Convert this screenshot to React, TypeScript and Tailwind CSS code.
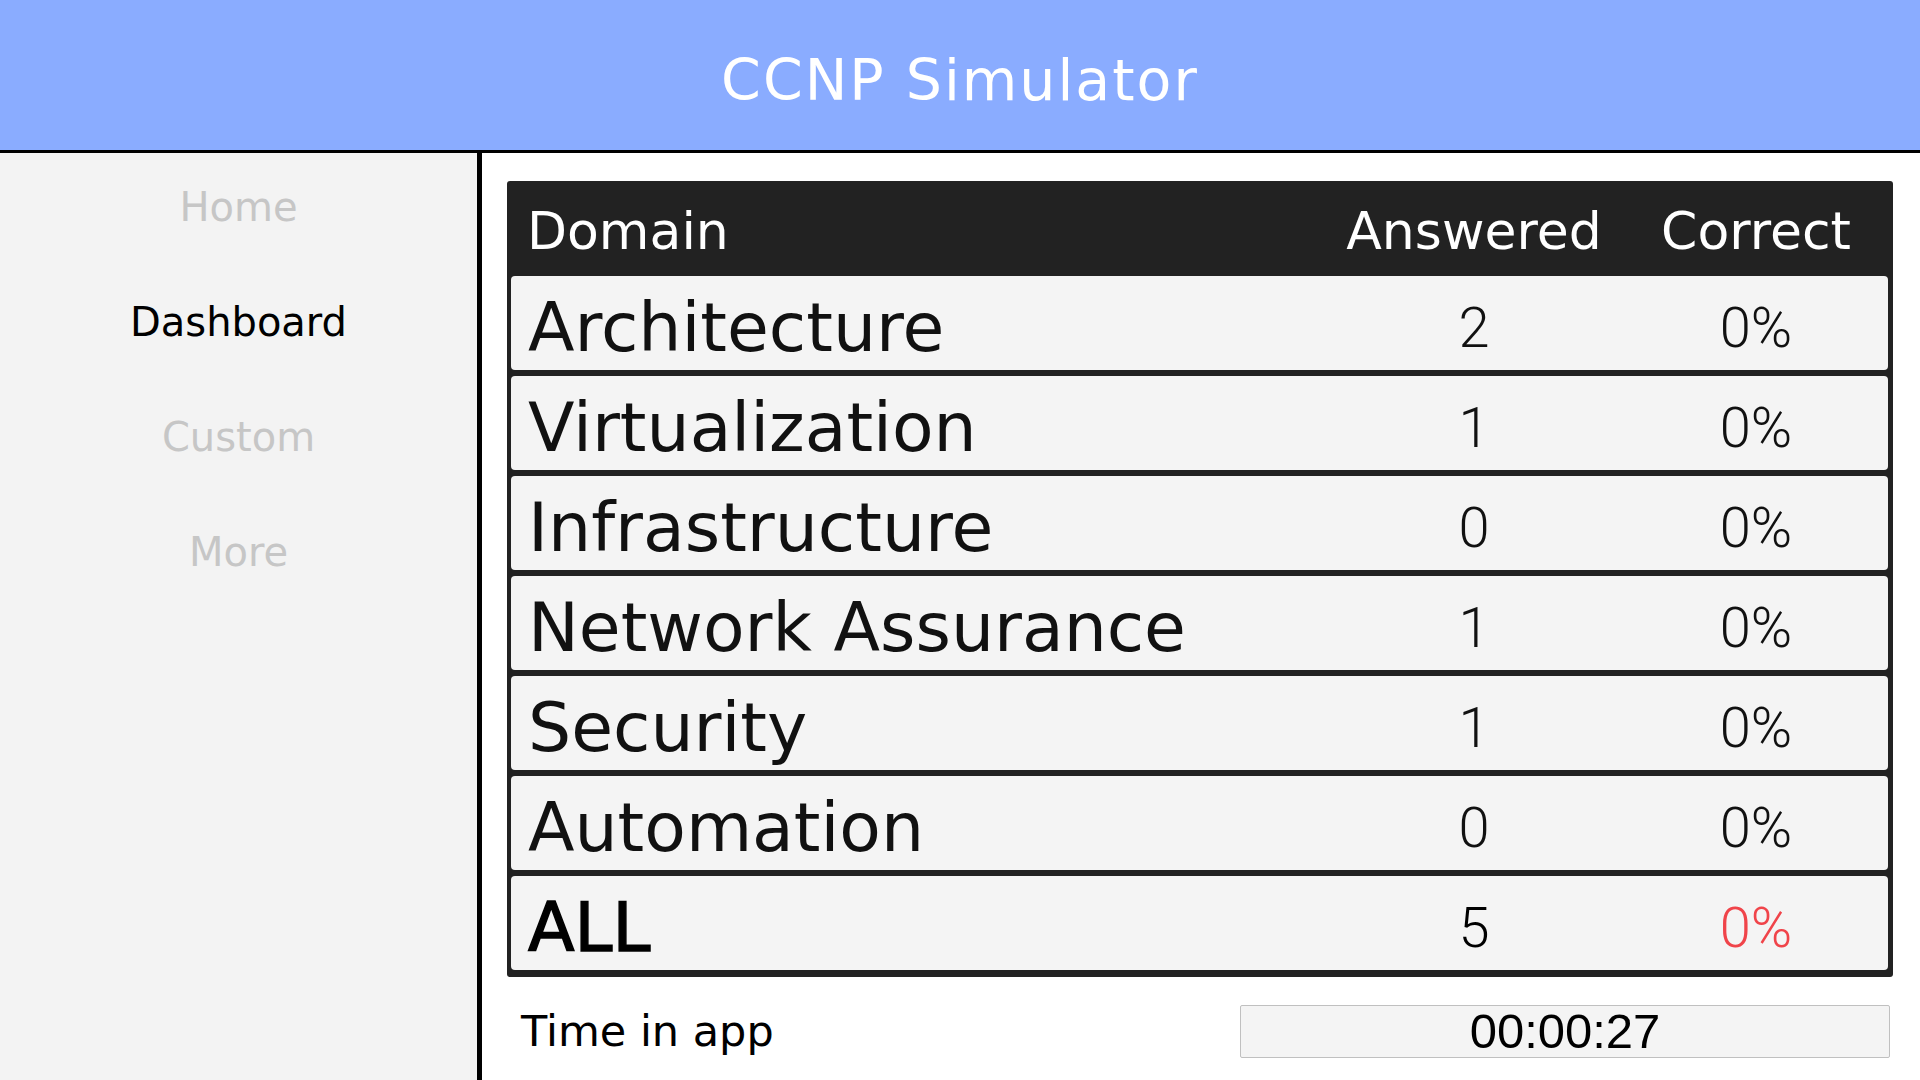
const rows = [
  { name: 'Architecture', answered: 2, correct: '0%' },
  { name: 'Virtualization', answered: 1, correct: '0%' },
  { name: 'Infrastructure', answered: 0, correct: '0%' },
  { name: 'Network Assurance', answered: 1, correct: '0%' },
  { name: 'Security', answered: 1, correct: '0%' },
  { name: 'Automation', answered: 0, correct: '0%' },
];

const navItems = [
  { label: 'Home', active: false },
  { label: 'Dashboard', active: true },
  { label: 'Custom', active: false },
  { label: 'More', active: false },
];

const App = () => {
  return (
    <div className="w-[1920px] h-[1080px] flex flex-col bg-white overflow-hidden font-['DejaVu_Sans',sans-serif]">
      <header className="h-[153px] shrink-0 bg-[#8aacff] border-b-[3px] border-black flex items-center justify-center">
        <h1 className="text-white text-[57px] tracking-[2px] leading-none pt-[10px]">CCNP Simulator</h1>
      </header>

      <div className="flex flex-1 min-h-0">
        <nav className="w-[482px] shrink-0 bg-[#f3f3f3] border-r-[5px] border-black flex flex-col">
          {navItems.map((item) => (
            <div
              key={item.label}
              className={
                'h-[115px] pb-[7px] flex items-center justify-center text-[40px] leading-none ' +
                (item.active ? 'text-black' : 'text-[#c6c6c6]')
              }
            >
              {item.label}
            </div>
          ))}
        </nav>

        <main className="flex-1 pl-[25px] pr-[27px] pt-[28px]">
          <div className="bg-[#222222] rounded-[3px]">
            <div className="h-[95px] pt-[4px] grid grid-cols-[1fr_290px_274px] items-center text-white text-[52px] leading-none">
              <span className="pl-[20px]">Domain</span>
              <span className="text-center">Answered</span>
              <span className="text-center">Correct</span>
            </div>
            <div className="flex flex-col gap-[6px] pl-[4px] pr-[5px] pb-[7px]">
              {rows.map((row) => (
                <div
                  key={row.name}
                  className="h-[94px] pt-[10px] bg-[#f4f4f4] rounded-[4px] grid grid-cols-[1fr_300px_264px] items-center leading-none text-[#111]"
                >
                  <span className="pl-[17px] text-[68px]">{row.name}</span>
                  <span className="text-center font-['Roboto',sans-serif] font-light text-[56px]">{row.answered}</span>
                  <span className="text-center font-['Roboto',sans-serif] font-light text-[56px]">{row.correct}</span>
                </div>
              ))}
              <div className="h-[94px] pt-[10px] bg-[#f4f4f4] rounded-[4px] grid grid-cols-[1fr_300px_264px] items-center leading-none text-black">
                <span className="pl-[17px] text-[68px] [-webkit-text-stroke:1.5px_black]">ALL</span>
                <span className="text-center font-['Roboto',sans-serif] font-light text-[56px]">5</span>
                <span className="text-center font-['Roboto',sans-serif] font-light text-[56px] text-[#f0444a]">0%</span>
              </div>
            </div>
          </div>

          <div className="mt-[28px] flex items-center justify-between pl-[14px] pr-[3px]">
            <span className="text-[43px] leading-none text-black">Time in app</span>
            <div className="w-[650px] h-[53px] bg-[#f4f4f4] border border-[#c0c0c0] rounded-[2px] flex items-center justify-center font-['Liberation_Sans',sans-serif] text-[49px] leading-none text-black">
              00:00:27
            </div>
          </div>
        </main>
      </div>
    </div>
  );
};

export default App;
